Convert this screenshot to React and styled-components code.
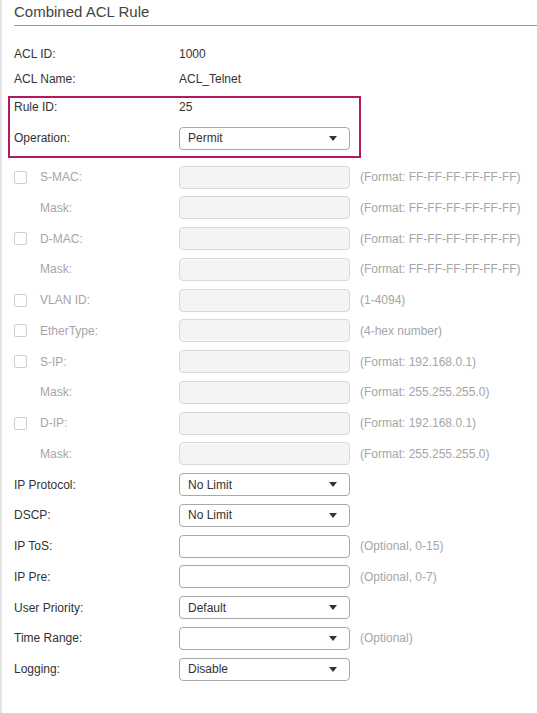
import React from 'react'
import styled, { createGlobalStyle } from 'styled-components'

const GlobalStyle = createGlobalStyle`
  html, body {
    margin: 0;
    padding: 0;
    background: #ffffff;
  }
  body {
    font-family: "Liberation Sans", Arial, sans-serif;
    font-size: 12px;
    color: #333333;
  }
`

const macHint = '(Format: FF-FF-FF-FF-FF-FF)'
const ipHint = '(Format: 192.168.0.1)'
const maskHint = '(Format: 255.255.255.0)'

const disabledRows = [
  { label: 'S-MAC:', check: true, hint: macHint },
  { label: 'Mask:', hint: macHint },
  { label: 'D-MAC:', check: true, hint: macHint },
  { label: 'Mask:', hint: macHint },
  { label: 'VLAN ID:', check: true, hint: '(1-4094)' },
  { label: 'EtherType:', check: true, hint: '(4-hex number)' },
  { label: 'S-IP:', check: true, hint: ipHint },
  { label: 'Mask:', hint: maskHint },
  { label: 'D-IP:', check: true, hint: ipHint },
  { label: 'Mask:', hint: maskHint },
]

const Select = ({ value }) => (
  <SelectBox>
    <span>{value}</span>
    <Arrow />
  </SelectBox>
)

const App = () => {
  return (
    <>
      <GlobalStyle />
      <Panel>
        <Title>Combined ACL Rule</Title>
        <Form>
          <InfoRow>
            <Label>ACL ID:</Label>
            <Value>1000</Value>
          </InfoRow>
          <InfoRow>
            <Label>ACL Name:</Label>
            <Value>ACL_Telnet</Value>
          </InfoRow>

          <Highlight>
            <RuleRow>
              <Label>Rule ID:</Label>
              <Value>25</Value>
            </RuleRow>
            <Row>
              <Label>Operation:</Label>
              <Select value='Permit' />
            </Row>
          </Highlight>

          <FieldGroup>
            {disabledRows.map((r, i) => (
              <Row key={i}>
                <Label $muted $indent={!r.check}>
                  {r.check && <Check />}
                  {r.label}
                </Label>
                <TextInput $disabled />
                <Hint>{r.hint}</Hint>
              </Row>
            ))}

            <Row>
              <Label>IP Protocol:</Label>
              <Select value='No Limit' />
            </Row>
            <Row>
              <Label>DSCP:</Label>
              <Select value='No Limit' />
            </Row>
            <Row>
              <Label>IP ToS:</Label>
              <TextInput />
              <Hint>(Optional, 0-15)</Hint>
            </Row>
            <Row>
              <Label>IP Pre:</Label>
              <TextInput />
              <Hint>(Optional, 0-7)</Hint>
            </Row>
            <Row>
              <Label>User Priority:</Label>
              <Select value='Default' />
            </Row>
            <Row>
              <Label>Time Range:</Label>
              <Select value='' />
              <Hint>(Optional)</Hint>
            </Row>
            <Row>
              <Label>Logging:</Label>
              <Select value='Disable' />
            </Row>
          </FieldGroup>
        </Form>
      </Panel>
    </>
  )
}

export default App

const Panel = styled.div`
  min-height: 713px;
  box-sizing: border-box;
  border-left: 2px solid #e4e4e4;
  padding-left: 12px;
`

const Title = styled.div`
  font-size: 15px;
  line-height: 18px;
  color: #444444;
  padding: 3px 0 4px;
  border-bottom: 1px solid #9a9a9a;
`

const Form = styled.div`
  padding-top: 15px;
`

const InfoRow = styled.div`
  display: grid;
  grid-template-columns: 165px auto;
  align-items: center;
  height: 25px;
`

const Label = styled.div`
  display: flex;
  align-items: center;
  color: ${p => (p.$muted ? '#a6a6a6' : '#333333')};
  padding-left: ${p => (p.$indent ? '26px' : '0')};
`

const Value = styled.div`
  color: #333333;
`

const Highlight = styled.div`
  box-sizing: border-box;
  width: 353px;
  margin: 5px 0 0 -6px;
  border: 2px solid #b01a5e;
  padding: 0 0 2px 4px;
`

const RuleRow = styled.div`
  display: grid;
  grid-template-columns: 165px auto;
  align-items: center;
  height: 18px;
  margin-bottom: 7px;
`

const Row = styled.div`
  display: grid;
  grid-template-columns: 165px 171px auto;
  align-items: center;
  height: 30.75px;
`

const FieldGroup = styled.div`
  padding-top: 4px;
`

const Check = styled.span`
  display: inline-block;
  box-sizing: border-box;
  width: 13px;
  height: 13px;
  border: 1px solid #cfcfcf;
  border-radius: 2px;
  background: #ffffff;
  margin-right: 13px;
`

const TextInput = styled.div`
  box-sizing: border-box;
  height: 23px;
  border: 1px solid ${p => (p.$disabled ? '#d9d9d9' : '#a9a9a9')};
  border-radius: 4px;
  background: ${p => (p.$disabled ? '#f4f4f4' : '#ffffff')};
`

const SelectBox = styled.div`
  box-sizing: border-box;
  height: 23px;
  display: flex;
  align-items: center;
  justify-content: space-between;
  padding: 0 12px 0 8px;
  border: 1px solid #a9a9a9;
  border-radius: 4px;
  background: #ffffff;
  color: #333333;
`

const Arrow = styled.span`
  width: 0;
  height: 0;
  border-left: 4px solid transparent;
  border-right: 4px solid transparent;
  border-top: 5px solid #2f3438;
`

const Hint = styled.div`
  color: #a6a6a6;
  padding-left: 10px;
  white-space: nowrap;
`
